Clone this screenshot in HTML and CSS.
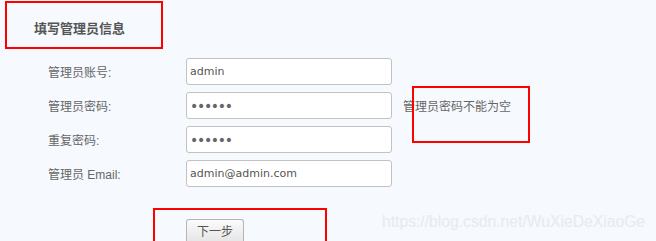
FILE: index.html
```html
<!DOCTYPE html>
<html lang="zh-CN">
<head>
<meta charset="utf-8">
<title>填写管理员信息</title>
<link rel="stylesheet" href="styles.css">
</head>
<body>
<div class="page">
  <h2 class="title">填写管理员信息</h2>
  <form class="form">
    <div class="row">
      <label class="label">管理员账号:</label>
      <input class="field" type="text" value="admin">
    </div>
    <div class="row">
      <label class="label">管理员密码:</label>
      <input class="field pw" type="password" value="123456">
      <span class="error">管理员密码不能为空</span>
    </div>
    <div class="row">
      <label class="label">重复密码:</label>
      <input class="field pw" type="password" value="123456">
    </div>
    <div class="row">
      <label class="label">管理员 Email:</label>
      <input class="field" type="text" value="admin@admin.com">
    </div>
    <div class="actions">
      <button class="btn" type="button">下一步</button>
    </div>
  </form>
  <div class="watermark">https://blog.csdn.net/WuXieDeXiaoGe</div>
  <div class="mark mark-title"></div>
  <div class="mark mark-error"></div>
  <div class="mark mark-btn"></div>
</div>
</body>
</html>
```
FILE: styles.css
```css
html, body {
  margin: 0;
  padding: 0;
  background: #f6f9fd;
}
body {
  width: 656px;
  height: 241px;
  overflow: hidden;
  font-family: "Liberation Sans", "Noto Sans CJK SC", sans-serif;
  font-size: 12px;
  color: #666;
}
.page {
  position: relative;
  width: 656px;
  height: 241px;
  overflow: hidden;
}
.title {
  margin: 0;
  padding: 21px 0 0 34px;
  font-size: 13px;
  line-height: 16px;
  font-weight: bold;
  color: #555;
}
.form {
  margin: 21px 0 0 48px;
}
.row {
  display: flex;
  align-items: center;
  height: 27px;
  margin-bottom: 7px;
}
.label {
  width: 138px;
  flex: none;
}
.field {
  box-sizing: border-box;
  width: 206px;
  height: 27px;
  margin: 0;
  padding: 0 3px;
  border: 1px solid #c2c2c2;
  border-radius: 3px;
  background: #fff;
  font-family: "DejaVu Sans", "Noto Sans CJK SC", sans-serif;
  font-size: 11px;
  color: #555;
  outline: none;
}
.pw {
  font-size: 14px;
  letter-spacing: -1.3px;
  color: #666;
}
.error {
  margin-left: 11px;
  color: #666;
}
.actions {
  padding: 25px 0 0 138px;
}
.btn {
  display: block;
  width: 58px;
  height: 22px;
  margin: 0;
  padding: 2px 0 0;
  border: 1px solid #b5b5b5;
  border-bottom: 0;
  border-radius: 3px 3px 0 0;
  background: linear-gradient(#fbfbfb, #e6e6e6);
  font-family: "Liberation Sans", "Noto Sans CJK SC", sans-serif;
  font-size: 12px;
  line-height: 18px;
  color: #555;
}
.watermark {
  position: absolute;
  left: 382px;
  top: 213px;
  font-family: "Liberation Sans", sans-serif;
  font-size: 15.7px;
  line-height: 18px;
  color: #e6eaee;
  white-space: nowrap;
}
.mark {
  position: absolute;
  border: 2px solid #ff0000;
  box-sizing: border-box;
}
.mark-title {
  left: 5px;
  top: 1px;
  width: 158px;
  height: 48px;
}
.mark-error {
  left: 412px;
  top: 86px;
  width: 118px;
  height: 57px;
}
.mark-btn {
  left: 153px;
  top: 208px;
  width: 174px;
  height: 33px;
  border-bottom: 0;
}
```
